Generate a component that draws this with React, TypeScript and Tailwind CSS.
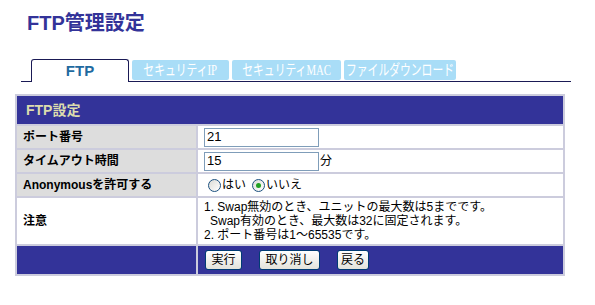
import React from 'react';

const sans = { fontFamily: '"Liberation Sans", "Noto Sans CJK JP", sans-serif' };

function Radio({ checked }: { checked?: boolean }) {
  return (
    <span className="inline-flex h-[13px] w-[13px] items-center justify-center rounded-full border border-[#1c5180] bg-gradient-to-br from-[#dcdcd6] to-white">
      {checked && <span className="h-[5px] w-[5px] rounded-full bg-[#21a121]" />}
    </span>
  );
}

function Btn({ label, w }: { label: string; w: string }) {
  return (
    <button
      className={`h-[20px] ${w} rounded-[3px] border border-[#003c74] bg-gradient-to-b from-white to-[#e3e3db] text-[12px] leading-none text-black`}
    >
      {label}
    </button>
  );
}

export default function App() {
  return (
    <div className="h-[305px] w-[595px] bg-white" style={sans}>
      {/* title */}
      <h1 className="pl-[27px] pt-[10px] text-[20px] font-bold leading-[26px] text-[#333399]">FTP管理設定</h1>

      {/* tabs */}
      <div className="ml-[21px] mt-[23px] flex w-[550px] items-end gap-[3px] border-b border-[#1a1a55]">
        <div className="-mb-px ml-[10px] flex h-[23px] w-[98px] items-center justify-center rounded-t-[3px] border border-b-0 border-[#1a1a55] bg-white text-[15px] font-bold text-[#1f6aa0]">
          FTP
        </div>
        {['セキュリティIP', 'セキュリティMAC', 'ファイルダウンロード'].map((t, i) => (
          <div
            key={t}
            className={`mb-px flex h-[20px] items-center justify-center rounded-[2px] bg-[#a9ddf7] text-[15px] text-white ${
              i === 0 ? 'w-[97px]' : i === 1 ? 'w-[109px]' : 'w-[112px]'
            }`}
            style={{ fontFamily: '"Liberation Serif", "Noto Sans CJK JP", serif' }}
          >
            <span className="inline-block shrink-0 scale-x-[0.72] whitespace-nowrap">{t}</span>
          </div>
        ))}
      </div>

      {/* settings table */}
      <div className="ml-[15px] mt-[12px] grid w-[550px] grid-cols-[179px_365px] gap-[2px] bg-[#ccccdd] p-[2px] text-[12px]">
        <div className="col-span-2 flex h-[28px] items-center bg-[#333399] pl-[9px] text-[14px] font-bold text-[#dcdcae]">
          FTP設定
        </div>

        <div className="flex h-[22px] items-center bg-[#dddddd] pl-[6px] font-bold">ポート番号</div>
        <div className="flex items-center bg-white pl-[6px]">
          <div className="flex h-[19px] w-[115px] items-center border border-[#7f9db9] pl-[2px] text-[13px]">21</div>
        </div>

        <div className="flex h-[22px] items-center bg-[#dddddd] pl-[6px] font-bold">タイムアウト時間</div>
        <div className="flex items-center bg-white pl-[6px]">
          <div className="flex h-[19px] w-[115px] items-center border border-[#7f9db9] pl-[2px] text-[13px]">15</div>
          <span className="ml-px">分</span>
        </div>

        <div className="flex h-[22px] items-center bg-[#dddddd] pl-[6px] font-bold">Anonymousを許可する</div>
        <div className="flex items-center gap-[1px] bg-white pl-[10px]">
          <Radio />
          <span className="mr-[5px]">はい</span>
          <Radio checked />
          <span>いいえ</span>
        </div>

        <div className="flex h-[46px] items-center bg-white pl-[6px] font-bold">注意</div>
        <div className="flex flex-col justify-center bg-white pl-[6px] leading-[14px]">
          <span>1. Swap無効のとき、ユニットの最大数は5までです。</span>
          <span className="pl-[6px]">Swap有効のとき、最大数は32に固定されます。</span>
          <span>2. ポート番号は1～65535です。</span>
        </div>

        <div className="h-[28px] bg-[#333399]" />
        <div className="flex items-center gap-[17px] bg-[#333399] pl-[7px]">
          <Btn label="実行" w="w-[37px]" />
          <Btn label="取り消し" w="w-[61px]" />
          <Btn label="戻る" w="w-[32px]" />
        </div>
      </div>
    </div>
  );
}
